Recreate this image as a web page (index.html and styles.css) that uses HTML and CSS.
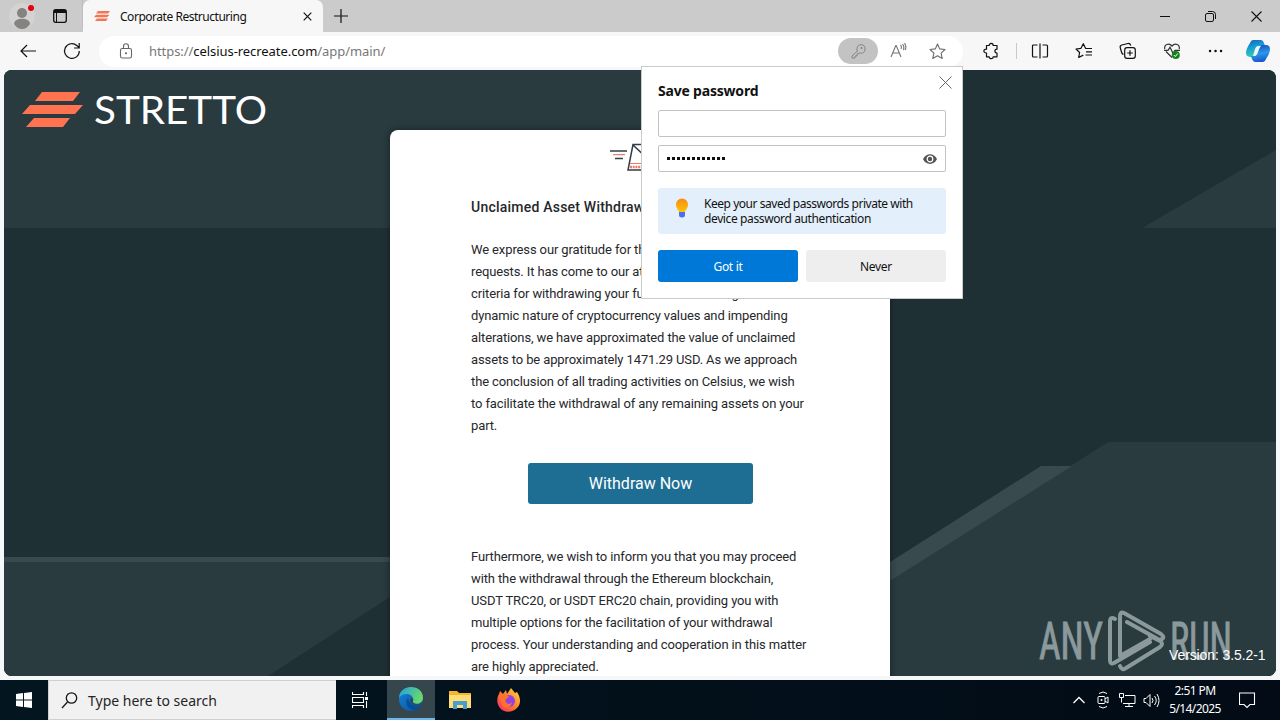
FILE: index.html
```html
<!DOCTYPE html>
<html lang="en">
<head>
<meta charset="utf-8">
<title>Corporate Restructuring</title>
<link rel="stylesheet" href="styles.css">
</head>
<body>
<div class="desktop">
  <header class="tabs">
    <div class="tab-tools">
      <svg class="avatar" width="28" height="28" viewBox="0 0 28 28"><circle cx="14" cy="14" r="13" fill="#d4d3d1"/><circle cx="14" cy="11" r="5" fill="#858381"/><path d="M6 22c0-7 16-7 16 0q-3 5-8 5t-8-5z" fill="#858381"/><circle cx="23" cy="6" r="3" fill="#e3000f"/></svg>
      <svg class="workspaces" width="16" height="16" viewBox="0 0 16 16"><rect x="1.700" y="1.700" width="12.600" height="12.600" rx="2" fill="none" stroke="#111" stroke-width="1.300"/><path d="M2 2h12v3H5v9H4V5H2z" fill="#111"/></svg>
    </div>
    <div class="tab">
      <svg class="favicon" width="16" height="10" viewBox="0 0 16 10"><path d="M4 0h12l-2 2.500H2zM2 3.700h13.500L13 6.300H0zM3 7.500h11L12 10H1z" fill="#f77452"/></svg>
      <span class="tab-title">Corporate Restructuring</span>
      <svg class="tab-close" width="9" height="9" viewBox="0 0 9 9"><path d="M.7.7l7.600 7.600M8.300.7L.7 8.300" stroke="#111" stroke-width="1.200"/></svg>
    </div>
    <svg class="new-tab" width="14" height="14" viewBox="0 0 14 14"><path d="M7 0v14M0 7h14" stroke="#111" stroke-width="1.200"/></svg>
    <div class="window-controls">
      <svg width="10" height="12" viewBox="0 0 10 12"><path d="M0 6.500h10" stroke="#111"/></svg>
      <svg width="11" height="11" viewBox="0 0 11 11"><path d="M3 .5h4.500q3 0 3 3V8" fill="none" stroke="#111"/><rect x=".5" y="2.500" width="8" height="8" rx="1.500" fill="none" stroke="#111"/></svg>
      <svg width="11" height="11" viewBox="0 0 11 11"><path d="M.5.5l10 10M10.500.5l-10 10" stroke="#111" stroke-width="1.100"/></svg>
    </div>
  </header>

  <nav class="toolbar">
    <svg class="back" width="16" height="14" viewBox="0 0 16 14"><path d="M16 7H1M7 1L1 7l6 6" fill="none" stroke="#111" stroke-width="1.200"/></svg>
    <svg class="reload" width="18" height="18" viewBox="0 0 18 18"><path d="M16.300 9a7.400 7.400 0 1 1-2.500-5.500L16 5.500M16.200 1v5H11" fill="none" stroke="#111" stroke-width="1.200"/></svg>
    <div class="address">
      <svg class="lock" width="14" height="16" viewBox="0 0 14 16"><rect x="1.500" y="5.500" width="11" height="9.500" rx="1.800" fill="none" stroke="#666" stroke-width="1.100"/><path d="M4.500 5.500V3.500a2.500 2.700 0 0 1 5 0v2" fill="none" stroke="#666" stroke-width="1.100"/><circle cx="7" cy="10.300" r="1" fill="#555"/></svg>
      <span class="url">https://<b>celsius-recreate.com</b>/app/main/</span>
      <span class="key"><svg width="16" height="16" viewBox="0 0 16 16"><path d="M7 8.500L2 13v2h3v-2h2v-2h1l1-1c4 1 6-1 6-4a4 4 0 0 0-8-.5c-.3 1 0 2 .5 3z" fill="none" stroke="#858585"/><circle cx="11.500" cy="5" r="1" fill="#858585"/></svg></span>
      <svg class="read" width="17" height="16" viewBox="0 0 17 16"><path d="M1 14L5.800 2.500h.4L11 14M2.700 10h6.600M10.500 2q1.500 1.500.5 4M12.500 1q2.300 2.500.8 6M14.500 0q2.500 4 .5 7" fill="none" stroke="#737373" stroke-width="1.100"/></svg>
      <svg class="star" width="17" height="17" viewBox="0 0 17 17"><path d="M8.500 1l2.200 4.900 5.300.6-3.900 3.600 1.100 5.300-4.700-2.700-4.700 2.700 1.100-5.300L1 6.500l5.300-.6z" fill="none" stroke="#6d6d6d" stroke-width="1.100" stroke-linejoin="round"/></svg>
    </div>
    <div class="extensions">
      <svg width="18" height="18" viewBox="0 0 18 18"><path d="M4.500 3.500h2.700c0-2.800 4-2.800 4 0h3.800v3.700c-2.800 0-2.800 3.800 0 3.800v3.800h-3.800c0 2.500-4 2.500-4 0H4.500V11C1 11 1 7.200 4.500 7.200z" fill="none" stroke="#111" stroke-width="1.200" stroke-linejoin="round"/></svg>
      <i class="divider"></i>
      <svg width="18" height="18" viewBox="0 0 18 18"><path d="M6.500 3H2.500q-1 0-1 1v10q0 1 1 1h4M9 1.500v15M11.500 3h4q1 0 1 1v10q0 1-1 1h-4" fill="none" stroke="#111" stroke-width="1.200"/></svg>
      <svg width="18" height="18" viewBox="0 0 18 18"><path d="M17 6.500h-6.300L8.300 1.700 6 6.300 1 7l3.600 3.500-.9 5 4.600-2.400M11 9.800h6M10.500 13h6.500" fill="none" stroke="#111" stroke-width="1.200" stroke-linejoin="round"/></svg>
      <svg width="18" height="18" viewBox="0 0 18 18"><path d="M4.500 12.500q-1.500-.5-2-2.500L1.200 5.500Q.8 3.500 2.800 3L9 1.500q2-.4 2.800 2" fill="none" stroke="#111" stroke-width="1.200"/><rect x="5.700" y="5.700" width="10.600" height="10.600" rx="2.300" fill="none" stroke="#111" stroke-width="1.200"/><path d="M11 8.200v5.600M8.200 11h5.600" stroke="#111" stroke-width="1.200"/></svg>
      <svg width="18" height="18" viewBox="0 0 18 18"><path d="M9 15.500L3 9.500M1.800 7C.8 2.500 6 .5 9 4c3-3.500 8.200-1.500 7.200 3M1 8.300h4l2-3 3 6 2-3h5" fill="none" stroke="#333" stroke-width="1.200"/><circle cx="12.800" cy="13" r="4" fill="#15831d"/><path d="M10.800 13l1.500 1.500 2.500-3" fill="none" stroke="white"/></svg>
      <svg width="18" height="18" viewBox="0 0 18 18"><path d="M3 9h.1M8.500 9h.1M14 9h.1" stroke="#111" stroke-width="2.400" stroke-linecap="round"/></svg>
    </div>
    <svg class="copilot" width="24" height="22" viewBox="0 0 24 22"><defs><linearGradient id="ca" x2=".3" y2="1"><stop stop-color="#1761ac"/><stop offset=".45" stop-color="#1899d8"/><stop offset="1" stop-color="#35cfa5"/></linearGradient><linearGradient id="cb" x1=".4" x2=".6" y2="1"><stop stop-color="#174fc9"/><stop offset=".5" stop-color="#2b98e8"/><stop offset="1" stop-color="#1551cf"/></linearGradient></defs><path d="M7 0h8q2 0 3 3l1 3h-5q-3 0-4 4l-2 6q-1 1-3 1Q0 17 0 13q0-4 4-10 1-3 3-3z" fill="url(#ca)"/><path d="M16 5h4q4 0 4 4 0 4-4 10-1 3-3 3H9q-2 0-3-3l-1-3h3q3 0 4-4l2-5q1-2 2-2z" fill="url(#cb)"/><path d="M12 6h3q-2 1-3 4l-2 5q-.5 1-2 1H7l2-7q1-3 3-3z" fill="#eaf9ff"/></svg>
  </nav>

  <main class="page">
    <svg class="backdrop" width="1272" height="606" viewBox="4 70 1272 606"><path d="M4 70h1272v606H4z" fill="#1f3034"/><path d="M4 70h640v60L428 228H4zM1142 228l134-78v78zM4 561h386v36L268 676H4zM890 581l218-139h168v234H890z" fill="#293b3f"/><path d="M4 557h386v5H4zM890 562l151-96h31L890 581z" fill="#384a4e"/></svg>
    <div class="brand">
      <svg width="260" height="42" viewBox="0 0 260 42"><path d="M20 4h38l-7 9H13zM8 17h53l-8 9H0zM12 30h36l-7 9H4z" fill="#ff7350"/><text class="wordmark" x="72" y="36" textLength="173" lengthAdjust="spacingAndGlyphs">STRETTO</text></svg>
    </div>
    <article class="letter">
      <svg class="mail" width="62" height="30" viewBox="0 0 62 30"><path d="M23 1.500h36L54 27H18zM23 2l15 14L59 2" fill="none" stroke="#303c46" stroke-width="1.500"/><path d="M0 8h17M5 15.500h8" stroke="#2c424b" stroke-width="1.400"/><path d="M3 11.700h12M20 20.500h11" stroke="#ef7b6b" stroke-width="1.200"/><path d="M20 24h12" stroke="#ef7b6b" stroke-width="2.500" stroke-dasharray="2 .7"/></svg>
      <h1>Unclaimed Asset Withdrawal</h1>
      <p>We express our gratitude for the<br>requests. It has come to our attention<br>criteria for withdrawing your funds. Considering the<br>dynamic nature of cryptocurrency values and impending<br>alterations, we have approximated the value of unclaimed<br>assets to be approximately 1471.29 USD. As we approach<br>the conclusion of all trading activities on Celsius, we wish<br>to facilitate the withdrawal of any remaining assets on your<br>part.</p>
      <button class="withdraw">Withdraw Now</button>
      <p>Furthermore, we wish to inform you that you may proceed<br>with the withdrawal through the Ethereum blockchain,<br>USDT TRC20, or USDT ERC20 chain, providing you with<br>multiple options for the facilitation of your withdrawal<br>process. Your understanding and cooperation in this matter<br>are highly appreciated.</p>
    </article>
    <svg class="watermark" width="240" height="64" viewBox="0 0 240 64"><g class="mark"><text x="3" y="50" textLength="64" lengthAdjust="spacingAndGlyphs">ANY</text><text x="134" y="50" textLength="62" lengthAdjust="spacingAndGlyphs">RUN</text><path d="M79 10q-5-3-5 3v38q0 5 4 3l36-21M84 47V7q0-5 4-3l37 21q4 3 1 5t-6-1L91 13M84 47l30-17M84 57q2 5 6 2l34-21q4-3 0-6l-10-5"/></g></svg>
    <span class="version">Version: 3.5.2-1</span>
  </main>

  <footer class="taskbar">
    <div class="start"><svg width="16" height="16" viewBox="0 0 16 16"><path d="M0 2l7-1v6.500H0zM8 .9L16 0v7.500H8zM0 8.500h7V15l-7-1zM8 8.500h8V16l-8-1z" fill="white"/></svg></div>
    <div class="search"><svg width="17" height="17" viewBox="0 0 17 17"><circle cx="10.500" cy="6" r="5.200" fill="none" stroke="#171717" stroke-width="1.300"/><path d="M6.500 10L1 16" stroke="#171717" stroke-width="1.300"/></svg><span>Type here to search</span></div>
    <div class="task view"><svg width="17" height="16" viewBox="0 0 17 16"><path d="M.5 0v2.500h11V0M.5 16v-2.500h11V16M.5 5.500h11v5H.5zM14.500 0v4M14.500 9v7" fill="none" stroke="white" stroke-width="1.100"/><path d="M13 5h3v3h-3z" fill="white"/></svg></div>
    <div class="task active"><svg width="24" height="24" viewBox="0 0 24 24"><defs><linearGradient id="ea" y2=".4"><stop stop-color="#249ee3"/><stop offset="1" stop-color="#69d96b"/></linearGradient><linearGradient id="eb" x2="1" y2="1"><stop stop-color="#1687d9"/><stop offset="1" stop-color="#064d9c"/></linearGradient></defs><circle cx="12" cy="12" r="12" fill="url(#eb)"/><path d="M0 11C1-4 24-3 24 11c0 5-6 7-9 5q-2-1-1-3c1-7-11-8-14-2z" fill="url(#ea)"/><path d="M9 11c-4 5 0 12 7 12 3-1 5-3 6-5-5 3-12 0-13-7z" fill="#064e98"/><path d="M13.500 11c2 3-1 4 1 5.500 3 2 7 1 9.500-1.500v3l-2-.2c-6 2-11-1-11-5q1-2 2.500-1.800z" fill="#36464d"/></svg></div>
    <div class="task"><svg width="22" height="20" viewBox="0 0 22 20"><path d="M0 1h8l2 2h12v15H0z" fill="#f1b72d"/><path d="M0 5h22v13H0z" fill="#ffdc75"/><path d="M4 11h14v8h-4v-4H8v4H4z" fill="#479fd0"/></svg></div>
    <div class="task"><svg width="24" height="24" viewBox="0 0 24 24"><defs><linearGradient id="ff" x1="1" x2="0" y2="1"><stop stop-color="#ffe448"/><stop offset=".5" stop-color="#ff7b27"/><stop offset="1" stop-color="#f32473"/></linearGradient></defs><path d="M2 6l1-3 3 3 3-4 1 4 4-6 4 5 2-1c4 6 4 12 0 16-5 5-13 5-17 0C-1 15 0 9 2 6z" fill="url(#ff)"/><circle cx="12" cy="13" r="6" fill="#9042e6"/><path d="M2 8c4-4 7-2 10 1l-3 2c-2 4 3 7 6 3 0 5-7 8-10 3z" fill="#ff7131"/></svg></div>
    <div class="tray">
      <svg class="chevron" width="12" height="8" viewBox="0 0 12 8"><path d="M.5 7L6 1.500 11.500 7" fill="none" stroke="white" stroke-width="1.300"/></svg>
      <svg class="camera" width="12" height="18" viewBox="0 0 12 18"><rect x="1" y="5.500" width="7" height="7" rx="1" fill="none" stroke="white"/><path d="M8 8l3-2v6l-3-2M2 2.500q4-3 8 0M2 15.500q4 3 8 0" fill="none" stroke="white"/><circle cx="4.500" cy="9" r="1" fill="white"/></svg>
      <svg class="network" width="17" height="15" viewBox="0 0 17 15"><path d="M6 2.500h10v8H4M10 10.500v3M6 13.500h8M.5.500h4v4h-4zM2.500 4.500v5" fill="none" stroke="white"/></svg>
      <svg class="sound" width="17" height="15" viewBox="0 0 17 15"><path d="M1 5.500h2l4-4v12l-4-4H1zM9 5q2 2.500 0 5M11.500 3q3.500 4.500 0 9M14 1q4 6.500 0 13" fill="none" stroke="white"/></svg>
      <div class="clock"><span>2:51 PM</span><span>5/14/2025</span></div>
      <svg class="notice" width="17" height="17" viewBox="0 0 17 17"><path d="M.5 1h15v11.500H11L8 15.500l-3-3H.5z" fill="none" stroke="white" stroke-width="1.100"/></svg>
    </div>
  </footer>

  <section class="popup">
    <svg class="dismiss" width="13" height="13" viewBox="0 0 13 13"><path d="M.5.5l12 12M12.500.5l-12 12" stroke="#666"/></svg>
    <h2>Save password</h2>
    <div class="field"></div>
    <div class="field secret"><span class="dots"></span><svg width="14" height="10" viewBox="0 0 14 10"><path d="M0 5c3-6.500 11-6.500 14 0-3 6.500-11 6.500-14 0z" fill="#555"/><circle cx="7" cy="5" r="2.800" fill="#555" stroke="white" stroke-width="1.200"/></svg></div>
    <div class="hint"><svg width="14" height="20" viewBox="0 0 14 20"><defs><linearGradient id="bulb" x2="0" y2="1"><stop stop-color="#f58b16"/><stop offset="1" stop-color="#ffc400"/></linearGradient></defs><path d="M4 14C3 11 1 10 1 6.500a6 6 0 0 1 12 0C13 10 11 11 10 14z" fill="url(#bulb)"/><path d="M4 14h6v3q0 2.500-3 2.500T4 17z" fill="#4d6fed"/></svg><p>Keep your saved passwords private with<br><span>device password authentication</span></p></div>
    <div class="actions"><button class="primary">Got it</button><button>Never</button></div>
  </section>
</div>
</body>
</html>
```

FILE: styles.css
```css
* { box-sizing: border-box; }
body { margin: 0; font-family: "Noto Sans", sans-serif; color: #111; }
svg { display: block; flex: none; }
button { border: 0; padding: 0; font: inherit; color: #111; }
.desktop { position: relative; width: 1280px; height: 720px; overflow: hidden; display: flex; flex-direction: column; background: #f6f7f9; }
.tabs { height: 32px; flex: none; display: flex; align-items: center; background: #cbcbcb; }
.tab-tools { width: 83px; height: 32px; display: flex; align-items: center; padding-left: 8px; border-right: 1px solid #bebebe; border-radius: 0 0 5px 0; }
.workspaces { margin-left: 16px; }
.tab { width: 240px; height: 32px; display: flex; align-items: center; padding: 0 11px; background: #f7f7f7; border-radius: 7px 7px 0 0; }
.tab-title { margin-left: 10px; flex: 1; font-size: 12px; letter-spacing: -.47px; white-space: nowrap; }
.new-tab { margin-left: 11px; }
.window-controls { margin-left: auto; display: flex; gap: 35px; align-items: center; padding-right: 18px; }
.toolbar { height: 38px; flex: none; display: flex; align-items: center; padding-left: 20px; background: #f7f7f7; }
.reload { margin-left: 27px; }
.address { width: 864px; height: 31px; margin-left: 18px; border-radius: 16px; background: white; display: flex; align-items: center; padding-left: 20px; }
.url { margin-left: 16px; font-size: 13px; letter-spacing: -.06px; color: #777; white-space: nowrap; }
.url b { color: #111; font-weight: 400; }
.key { width: 40px; height: 26px; margin-left: auto; border-radius: 13px; background: #c3c3c3; display: flex; align-items: center; justify-content: center; }
.read { margin-left: 12px; }
.star { margin: 0 17px 0 22px; }
.extensions { display: flex; align-items: center; margin-left: 19px; gap: 26px; }
.divider { width: 1px; height: 16px; margin: 0 -12px 0 -10px; background: #c8c8c8; }
.copilot { margin-left: 21px; }
.page { position: relative; height: 606px; margin: 0 4px 4px; flex: none; border-radius: 8px; overflow: hidden; background: #1f3034; }
.backdrop { position: absolute; inset: 0; }
.brand { position: relative; height: 60px; padding: 18px 0 0 18px; }
.wordmark { font: 400 39px Lato, sans-serif; fill: white; }
.letter { position: relative; width: 500px; height: 560px; margin-left: 386px; padding: 13px 0 0 81px; display: flex; flex-direction: column; background: white; border-radius: 8px 8px 0 0; box-shadow: 0 0 7px #0007; font-family: Roboto, sans-serif; color: #26282b; }
.mail { margin-left: 139px; }
.letter h1 { margin: 23px 0 21px; font-size: 14px; line-height: 22px; font-weight: 500; letter-spacing: .22px; }
.letter p { margin: 0; font-size: 13px; line-height: 22px; letter-spacing: -.12px; white-space: nowrap; }
.withdraw { width: 225px; height: 41px; flex: none; margin: 26px 0 42px 57px; border-radius: 3px; background: #1e6e94; color: white; font-size: 16px; }
.watermark { position: absolute; left: 1032px; top: 539px; }
.mark { opacity: .55; font: 51px "Roboto Condensed", "Liberation Sans", sans-serif; fill: #dce7e8; }
.mark text { stroke: #dce7e8; stroke-width: .8px; }
.mark path { fill: none; stroke: #dce7e8; stroke-width: 4px; stroke-linejoin: round; stroke-linecap: round; }
.version { position: absolute; left: 1165px; top: 577px; font: 14px/17px "Liberation Sans", sans-serif; letter-spacing: -.1px; color: white; white-space: nowrap; }
.taskbar { height: 40px; flex: none; display: flex; background: linear-gradient(90deg, #03161f, #020d18 80%, #020b16); color: white; }
.start, .task { width: 49px; display: flex; align-items: center; justify-content: center; }
.start { width: 48px; }
.view { width: 51px; padding-right: 3px; }
.search { width: 288px; display: flex; align-items: center; padding-left: 12px; background: #f1f1f1; border: 1px solid #cfcfcf; border-width: 1px 0 1px 1px; color: #252525; font-size: 14px; }
.search span { margin-left: 10px; }
.active { width: 48px; background: #36464d; border-bottom: 2px solid #72b5e8; }
.tray { margin-left: auto; width: 207px; display: flex; align-items: center; }
.camera { margin-left: 12px; }
.network { margin-left: 10px; }
.sound { margin-left: 7px; }
.clock { margin-left: 0; width: 70px; font-size: 12px; line-height: 18px; text-align: center; display: flex; flex-direction: column; letter-spacing: -.6px; }
.notice { margin-left: 9px; }
.popup { position: absolute; left: 641px; top: 66px; width: 322px; height: 233px; padding: 15px 16px; display: flex; flex-direction: column; background: white; border: 1px solid #c8cacc; }
.dismiss { position: absolute; right: 10px; top: 9px; }
.popup h2 { margin: 0 0 10px; height: 18px; font-size: 14px; line-height: 18px; letter-spacing: -.2px; white-space: nowrap; }
.field { height: 27px; flex: none; margin-bottom: 8px; border: 1px solid #c2c2c2; border-radius: 2px; }
.secret { display: flex; align-items: center; justify-content: space-between; padding: 0 8px 0 8px; }
.dots { width: 60px; height: 3px; background: repeating-linear-gradient(90deg, #111 0 3px, transparent 3px 5px); }
.hint { height: 46px; flex: none; margin-top: 8px; display: flex; padding: 8px 17px; border-radius: 3px; background: #e3effa; }
.hint svg { margin-top: 2px; }
.hint p { margin: 0 0 0 15px; font-size: 12px; line-height: 15px; letter-spacing: -.46px; white-space: nowrap; }
.hint span { letter-spacing: -.38px; }
.actions { display: flex; gap: 8px; margin-top: 16px; }
.actions button { width: 140px; height: 32px; border-radius: 3px; background: #eee; font-size: 12px; letter-spacing: -.3px; }
.actions .primary { color: white; background: #0078d7; }
```
